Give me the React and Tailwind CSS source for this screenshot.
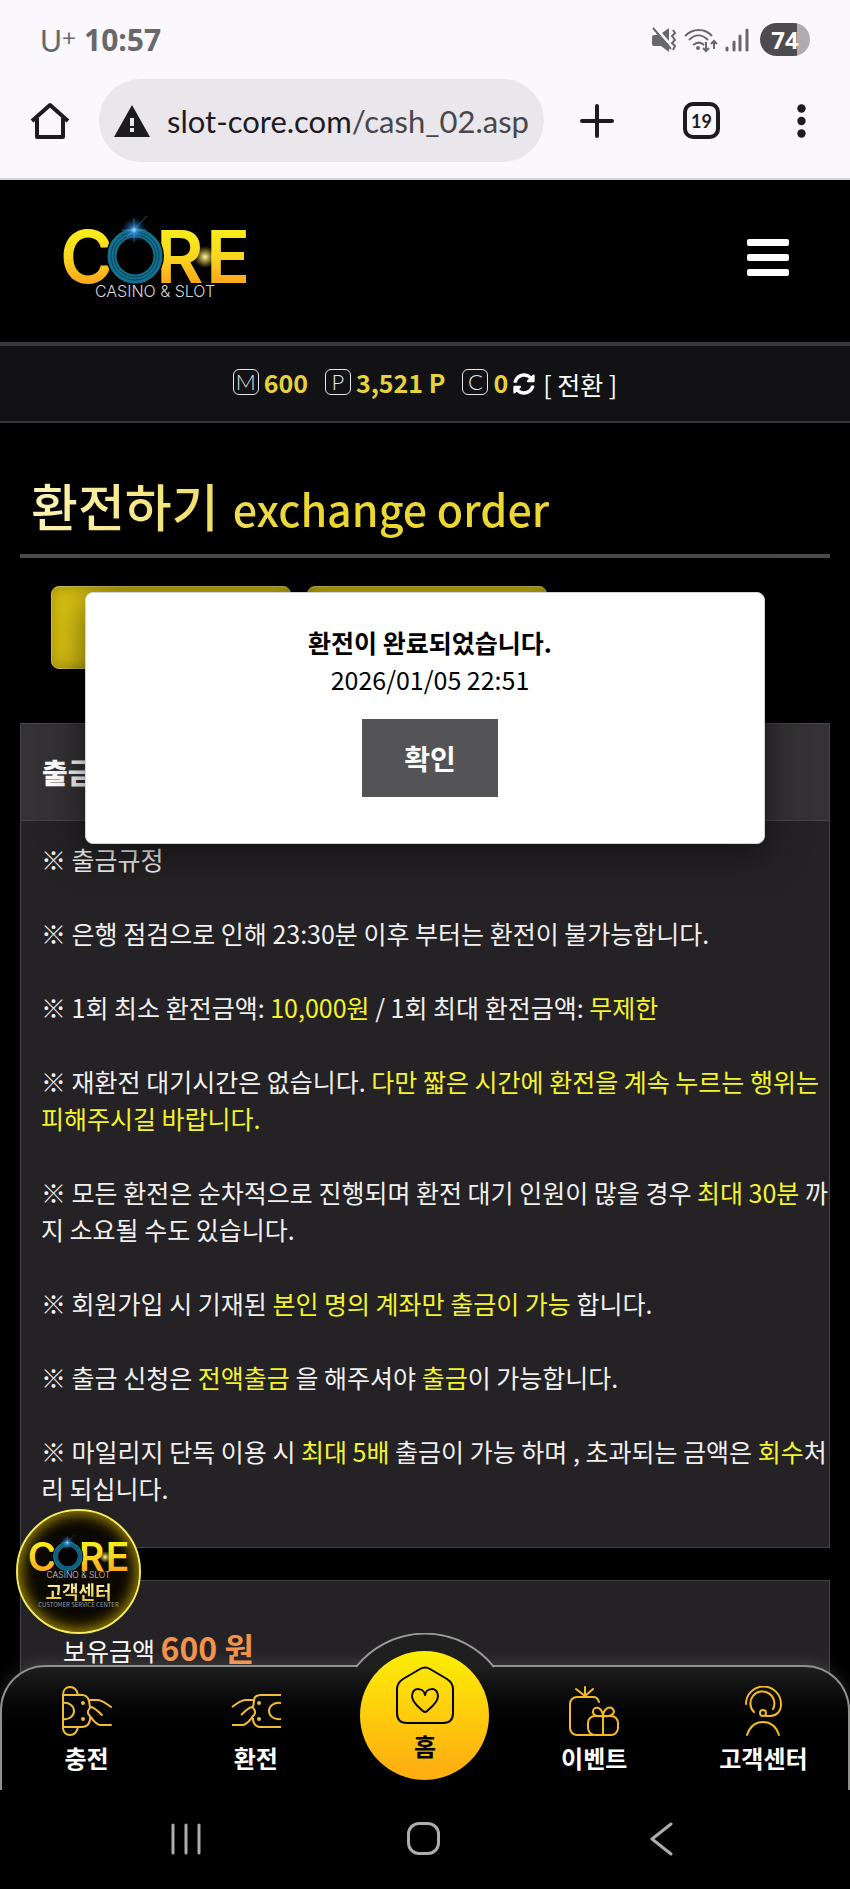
import { FaSyncAlt } from "react-icons/fa";

const rules = [
  [{ text: "※ 출금규정" }],
  [{ text: "※ 은행 점검으로 인해 23:30분 이후 부터는 환전이 불가능합니다." }],
  [
    { text: "※ 1회 최소 환전금액: " },
    { text: "10,000원", mark: true },
    { text: " / 1회 최대 환전금액: " },
    { text: "무제한", mark: true },
  ],
  [
    { text: "※ 재환전 대기시간은 없습니다. " },
    {
      text: "다만 짧은 시간에 환전을 계속 누르는 행위는 피해주시길 바랍니다.",
      mark: true,
    },
  ],
  [
    { text: "※ 모든 환전은 순차적으로 진행되며 환전 대기 인원이 많을 경우 " },
    { text: "최대 30분", mark: true },
    { text: " 까지 소요될 수도 있습니다." },
  ],
  [
    { text: "※ 회원가입 시 기재된 " },
    { text: "본인 명의 계좌만 출금이 가능", mark: true },
    { text: " 합니다." },
  ],
  [
    { text: "※ 출금 신청은 " },
    { text: "전액출금", mark: true },
    { text: " 을 해주셔야 " },
    { text: "출금", mark: true },
    { text: "이 가능합니다." },
  ],
  [
    { text: "※ 마일리지 단독 이용 시 " },
    { text: "최대 5배", mark: true },
    { text: " 출금이 가능 하며 , 초과되는 금액은 " },
    { text: "회수", mark: true },
    { text: "처리 되십니다." },
  ],
];

// CORE wordmark with the blue ring as the letter O
const Logo = ({ id, className }) => (
  <svg viewBox="0 0 190 90" className={className} role="img" aria-label="CORE Casino & Slot">
    <defs>
      <linearGradient id={`${id}-gold`} gradientUnits="userSpaceOnUse" x1="0" y1="18" x2="0" y2="72">
        <stop offset="0" stopColor="#f6ec1c" />
        <stop offset="0.5" stopColor="#fbd51f" />
        <stop offset="1" stopColor="#fca61c" />
      </linearGradient>
      <radialGradient id={`${id}-blue`}>
        <stop offset="0" stopColor="#d6f1ff" />
        <stop offset="0.25" stopColor="#2f8fd8" stopOpacity="0.8" />
        <stop offset="1" stopColor="#0a3c70" stopOpacity="0" />
      </radialGradient>
      <radialGradient id={`${id}-flare`}>
        <stop offset="0" stopColor="#fff7a8" />
        <stop offset="1" stopColor="#fbd51f" stopOpacity="0" />
      </radialGradient>
    </defs>
    <g
      fill={`url(#${id}-gold)`}
      fontFamily="Inter, sans-serif"
      fontWeight="600"
      fontSize="73"
    >
      <text x="-1" y="71">C</text>
      <text x="95" y="71">R</text>
      <text x="145" y="71">E</text>
    </g>
    <circle cx="74" cy="44" r="29" fill="#000" />
    <circle cx="74" cy="44" r="23" fill="none" stroke="#12718f" strokeWidth="9" />
    <circle cx="74" cy="44" r="24" fill="none" stroke="#0a3f52" strokeWidth="1" />
    <circle cx="74" cy="44" r="21" fill="none" stroke="#0a3f52" strokeWidth="1" />
    <circle cx="73" cy="18" r="13" fill={`url(#${id}-blue)`} />
    <path d="M60 18h26M73 6v24M66 25 86 4" stroke="#6fc0f5" strokeWidth="0.7" opacity="0.6" />
    <circle cx="144" cy="45" r="11" fill={`url(#${id}-flare)`} />
    <text
      x="94"
      y="85"
      textAnchor="middle"
      fill="#d8d8d8"
      fontFamily="Inter, sans-serif"
      fontSize="16"
      fontWeight="300"
    >
      CASINO &amp; SLOT
    </text>
  </svg>
);

const ChargeIcon = () => (
  <svg viewBox="0 0 50 50" className="size-[50px]" fill="none" stroke="#f0bd35" strokeWidth="2" strokeLinecap="round" strokeLinejoin="round">
    <path d="M1 9V42C1 46 4 49 8 49S15 46 16 41M1 9C1 4 4 1 8 1S15 4 16 9" />
    <path d="M1 9H20C24 9 26 11 27 15L28 21M1 41H20C24 41 27 39 28 34L28 32" />
    <path d="M1 17C7 16 12 20 12 25S7 34 1 33" />
    <path d="M28 14H35C41 14 44 18 49 21M40 29C36 26 34 22 29 21C26 23 25 27 27 29C31 33 33 39 39 39H49" />
    <circle cx="21" cy="17" r="1" fill="#f0bd35" />
    <circle cx="21" cy="33" r="1" fill="#f0bd35" />
  </svg>
);

const ExchangeIcon = () => (
  <svg viewBox="0 0 50 50" className="size-[50px]" fill="none" stroke="#f0bd35" strokeWidth="2" strokeLinejoin="round">
    <path d="M50 9H30C26 9 23 11 23 15L22 21M50 41H30C26 41 23 39 22 34L22 32" />
    <path d="M50 17C43 16 38 20 38 25S43 34 50 33" />
    <path d="M22 14H15C9 14 6 18 1 21M10 29C14 26 16 22 21 21C24 23 25 27 23 29C19 33 17 39 11 39H1" />
    <circle cx="28" cy="17" r="1" fill="#f0bd35" />
    <circle cx="28" cy="33" r="1" fill="#f0bd35" />
  </svg>
);

const EventIcon = () => (
  <svg viewBox="0 0 50 50" className="size-[50px]" fill="none" stroke="#f5b921" strokeWidth="2" strokeLinecap="round" strokeLinejoin="round">
    <path d="M16 1V10L7 3M16 10 24 3" />
    <path d="M30 16C29 12 27 11 24 11H8a7 7 0 0 0-7 7V42a7 7 0 0 0 7 7H24" />
    <rect x="19" y="30" width="30" height="19" rx="7" />
    <path d="M34 30V49M34 30C28 31 23 29 24 25C25 20 32 20 34 29C36 20 43 20 45 25C45 29 40 31 34 30" />
  </svg>
);

const SupportIcon = () => (
  <svg viewBox="0 0 50 50" className="size-[50px]" fill="none" stroke="#f5b921" strokeWidth="2" strokeLinecap="round">
    <path d="M8 18A17.5 17.5 0 0 1 43 18C43 26 38 30 32 30H28" />
    <path d="M16 26A12 12 0 1 1 35 23" />
    <circle cx="25" cy="27" r="3" />
    <path d="M9 49C12 40 18 36 25 36S38 40 41 49" />
  </svg>
);

const BrowserBar = () => (
  <header className="shrink-0 border-b-2 border-gray-300 bg-[#faf8fd] font-['Lato',sans-serif]">
    {/* Status bar */}
    <div className="flex h-[79px] items-center justify-between px-10 text-[#68686b]">
      <div className="flex items-center gap-2">
        <span className="flex text-[30px] leading-none">
          U<sup className="top-0 text-[24px] leading-none">+</sup>
        </span>
        <span className="font-['Open_Sans',sans-serif] text-[30px] leading-none font-bold">10:57</span>
      </div>
      <div className="flex items-center gap-[7px]">
        {/* Muted */}
        <svg viewBox="0 0 26 26" className="size-[26px]" fill="currentColor">
          <path d="M1 10c0-1 1-2 2-2h4L18 18v7l-8-6H3c-1 0-2-1-2-2zM11 6l7-5v13z" />
          <path d="M2 1 20 22M22 3l2 3-3 3 3 4-3 3 3 3-2 4" fill="none" stroke="currentColor" strokeWidth="2" />
        </svg>
        {/* Wi-Fi */}
        <svg viewBox="0 0 34 26" className="h-[26px] w-[34px]" fill="none" stroke="currentColor" strokeWidth="2">
          <path d="M1 9C9 1 21 1 28 9M5 13c6-6 13-6 19 0M9 18c4-3 8-3 11 0" />
          <circle cx="14" cy="21" r="1" fill="currentColor" />
          <path d="M22 15v9m-3-3 3 3 3-3M30 22v-8m-3 3 3-3 3 3" />
        </svg>
        {/* Signal */}
        <svg viewBox="0 0 24 26" className="h-[26px] w-6" stroke="currentColor" strokeWidth="3" strokeLinecap="round">
          <path d="M2 21v2M9 15v8M15 9v14M22 3v20" />
        </svg>
        <span className="ml-1 flex h-[33px] w-[50px] items-center justify-center rounded-full bg-linear-to-r from-[#4d4b4f] from-75% to-[#aeacb0] to-75% font-['Open_Sans',sans-serif] text-2xl font-bold text-white">
          74
        </span>
      </div>
    </div>
    {/* Address bar */}
    <div className="flex items-center pr-11 pb-4 pl-[30px] text-[#1c1b1f]">
      <button aria-label="Home">
        <svg viewBox="0 0 40 40" className="size-10" fill="none" stroke="currentColor" strokeWidth="4" strokeLinejoin="round">
          <path d="M7 17V36H33V17M2 20 20 4 38 20" />
        </svg>
      </button>
      <div className="ml-[29px] flex h-[83px] min-w-0 flex-1 items-center gap-4 rounded-full bg-[#eae7ec] pr-4 pl-[14px]">
        <svg viewBox="0 0 38 34" className="h-[34px] w-[38px] shrink-0">
          <path d="M19 1 37 33H1z" fill="currentColor" />
          <path d="M19 14v8M19 24v4" stroke="#eae7ec" strokeWidth="4" />
        </svg>
        <p className="min-w-0 flex-1 overflow-hidden text-[31px] leading-10 whitespace-nowrap">
          slot-core.com<span className="text-[#48474b]">/cash_02.asp</span>
        </p>
      </div>
      <div className="ml-9 flex w-[226px] items-center justify-between">
        <button aria-label="New tab">
          <svg viewBox="0 0 34 34" className="size-[34px]" stroke="currentColor" strokeWidth="4" strokeLinecap="round">
            <path d="M17 2v30M2 17h30" />
          </svg>
        </button>
        <button
          aria-label="Tabs"
          className="flex size-[37px] items-center justify-center rounded-[10px] border-4 border-current text-lg font-bold"
        >
          19
        </button>
        <button aria-label="Menu" className="pl-2">
          <svg viewBox="0 0 9 34" className="h-[34px] w-[9px]" fill="currentColor">
            <circle cx="4.5" cy="4.5" r="4.2" />
            <circle cx="4.5" cy="17" r="4.2" />
            <circle cx="4.5" cy="29.5" r="4.2" />
          </svg>
        </button>
      </div>
    </div>
  </header>
);

const Balance = ({ letter, value }) => (
  <div className="flex items-center gap-[5px]">
    <span className="flex size-[26px] items-center justify-center rounded-md border border-gray-200 font-['Lato',sans-serif] text-[22px] leading-none font-light text-gray-200">
      {letter}
    </span>
    <b className="leading-9 text-[#e6d33c]">{value}</b>
  </div>
);

const NavItem = ({ label, children }) => (
  <a href="#" className="flex flex-col items-center gap-1 pt-[19px]">
    {children}
    <span className="text-2xl leading-9 font-bold text-white">{label}</span>
  </a>
);

const BottomNav = () => (
  <nav className="absolute inset-x-0 bottom-0">
    <div className="grid h-[125px] grid-cols-5 rounded-t-[45px] border-2 border-b-0 border-[#8f8f8c] bg-linear-to-b from-[#1e1e1e] to-black to-65% shadow-[0_-2px_16px_rgba(255,255,255,0.12)]">
      <NavItem label="충전">
        <ChargeIcon />
      </NavItem>
      <NavItem label="환전">
        <ExchangeIcon />
      </NavItem>
      <div className="relative flex justify-center">
        {/* Arch behind the home button */}
        <svg viewBox="0 0 140 36" className="absolute -top-[34px] h-9 w-[140px]">
          <path d="M1 34A88 88 0 0 1 139 34V36H1z" fill="#1e1f1e" />
          <path d="M1 34A88 88 0 0 1 139 34" fill="none" stroke="#9a9a9a" strokeWidth="2" />
        </svg>
        <a
          href="#"
          className="relative -mt-4 flex size-[129px] shrink-0 flex-col items-center rounded-full bg-linear-to-b from-[#fbee05] to-[#fdb010] to-90% pt-[15px] text-black"
        >
          <svg viewBox="0 0 58 58" className="size-[58px]" fill="none" stroke="currentColor" strokeWidth="2" strokeLinejoin="round">
            <path d="M24 3Q29 0 34 3L51 13Q57 17 57 23V47Q57 57 47 57H11Q1 57 1 47V23Q1 17 7 13Z" />
            <path d="M29 29C28 22 17 20 16 30C16 37 24 42 27 45Q29 47 31 45C34 42 42 37 42 30C41 20 30 22 29 29Z" />
          </svg>
          <span className="mt-1 text-2xl leading-9 font-bold">홈</span>
        </a>
      </div>
      <NavItem label="이벤트">
        <EventIcon />
      </NavItem>
      <NavItem label="고객센터">
        <SupportIcon />
      </NavItem>
    </div>
  </nav>
);

const SystemNav = () => (
  <div className="flex h-[99px] shrink-0 items-center justify-between bg-black px-[20%] pb-0.5 text-[#aeacae]">
    <button aria-label="Recent apps">
      <svg viewBox="0 0 32 32" className="size-8" stroke="currentColor" strokeWidth="3" strokeLinecap="round">
        <path d="M3 2v28M16 2v28M29 2v28" />
      </svg>
    </button>
    <button aria-label="Home screen" className="size-[33px] rounded-xl border-3 border-current" />
    <button aria-label="Back">
      <svg viewBox="0 0 36 34" className="h-[34px] w-9" fill="none" stroke="currentColor" strokeWidth="3" strokeLinecap="round" strokeLinejoin="round">
        <path d="M27 2 8 17 27 32" />
      </svg>
    </button>
  </div>
);

const App = () => {
  return (
    <div className="flex h-screen flex-col overflow-hidden bg-black font-['Noto_Sans_CJK_KR',sans-serif] text-[25px] text-white">
      <BrowserBar />

      <div className="relative min-h-0 flex-1 overflow-hidden">
        {/* Site header */}
        <div className="flex h-[162px] items-center justify-between px-[61px] pb-2">
          <Logo id="top" className="h-[90px] w-[190px]" />
          <button aria-label="메뉴" className="flex w-[42px] flex-col gap-2">
            <span className="h-[7px] rounded-xs bg-white" />
            <span className="h-[7px] rounded-xs bg-white" />
            <span className="h-[7px] rounded-xs bg-white" />
          </button>
        </div>

        {/* Balances */}
        <div className="flex h-[81px] items-center justify-center gap-[17px] border-t-4 border-b-2 border-[#38383b] bg-[#121214] pb-1">
          <Balance letter="M" value="600" />
          <Balance letter="P" value="3,521 P" />
          <div className="flex items-center gap-[5px]">
            <Balance letter="C" value="0" />
            <button className="flex items-center gap-2 pt-1 leading-9">
              <FaSyncAlt className="size-[22px]" /> [ 전환 ]
            </button>
          </div>
        </div>

        <main className="px-5 pt-[46px]">
          <h1 className="flex border-b-4 border-[#4a4a4a] pb-[10px] pl-[11px]">
            <span className="flex items-baseline gap-[14px] bg-linear-to-r from-[#fdf3b4] to-[#ecd631] to-50% bg-clip-text leading-[72px] font-medium text-transparent">
              <span className="text-[51px]">환전하기</span>
              <span className="text-[43px]">exchange order</span>
            </span>
          </h1>

          <div className="flex gap-4 px-[31px] pt-7">
            <button
              aria-label="환전신청"
              className="h-[83px] w-[240px] rounded-lg border border-[#c9bd4c] bg-[#e0c814] shadow-[inset_0_0_16px_rgba(90,80,0,0.5)]"
            />
            <button
              aria-label="환전내역"
              className="h-[83px] w-[240px] rounded-lg border border-[#c9bd4c] bg-[#e0c814] shadow-[inset_0_0_16px_rgba(90,80,0,0.5)]"
            />
          </div>

          <section className="mt-[54px] border border-[#454447] bg-[#242224]">
            <h2 className="flex h-[97px] items-center border-b border-[#454447] bg-[#343234] pl-[21px] text-[28px] font-black">
              출금
            </h2>
            <div className="flex flex-col gap-[37px] pt-5 pb-10 pl-5 leading-[37px] break-all">
              {rules.map((parts, i) => (
                <p key={i}>
                  {parts.map((part, j) => (
                    <span key={j} className={part.mark ? "text-[#f4f42c]" : "text-[#f1f0f1]"}>
                      {part.text}
                    </span>
                  ))}
                </p>
              ))}
            </div>
          </section>

          <section className="mt-8 h-[200px] border border-[#454447] bg-[#242224] pt-[42px] pl-[42px]">
            <p className="leading-[48px]">
              보유금액 <b className="text-[32px] text-[#f2924b]">600 원</b>
            </p>
          </section>
        </main>

        <BottomNav />

        {/* Customer center badge */}
        <a
          href="#"
          className="absolute bottom-[156px] left-4 flex size-[125px] flex-col items-center rounded-full border-2 border-[#f5ec5c] bg-[#0b0800] pt-[22px] shadow-[inset_0_0_14px_3px_#a58a06]"
        >
          <Logo id="badge" className="h-12 w-[102px]" />
          <span className="bg-linear-to-b from-[#fdf6b8] to-[#e8c528] bg-clip-text text-lg leading-5 font-bold text-transparent">
            고객센터
          </span>
          <span className="text-[6px] leading-2 text-gray-400">CUSTOMER SERVICE CENTER</span>
        </a>

        {/* Result dialog */}
        <div
          role="dialog"
          aria-labelledby="result-title"
          className="absolute inset-x-[10%] top-[412px] flex flex-col items-center rounded-lg border border-gray-300 bg-white pt-[31px] pb-[46px] pl-[10px] leading-[37px] text-black shadow-[0_6px_40px_rgba(0,0,0,0.6)]"
        >
          <strong id="result-title">환전이 완료되었습니다.</strong>
          <span>2026/01/05 22:51</span>
          <button className="mt-[21px] h-[78px] w-[136px] bg-[#545456] text-[28px] font-bold text-white">
            확인
          </button>
        </div>
      </div>

      <SystemNav />
    </div>
  );
};

export default App;
